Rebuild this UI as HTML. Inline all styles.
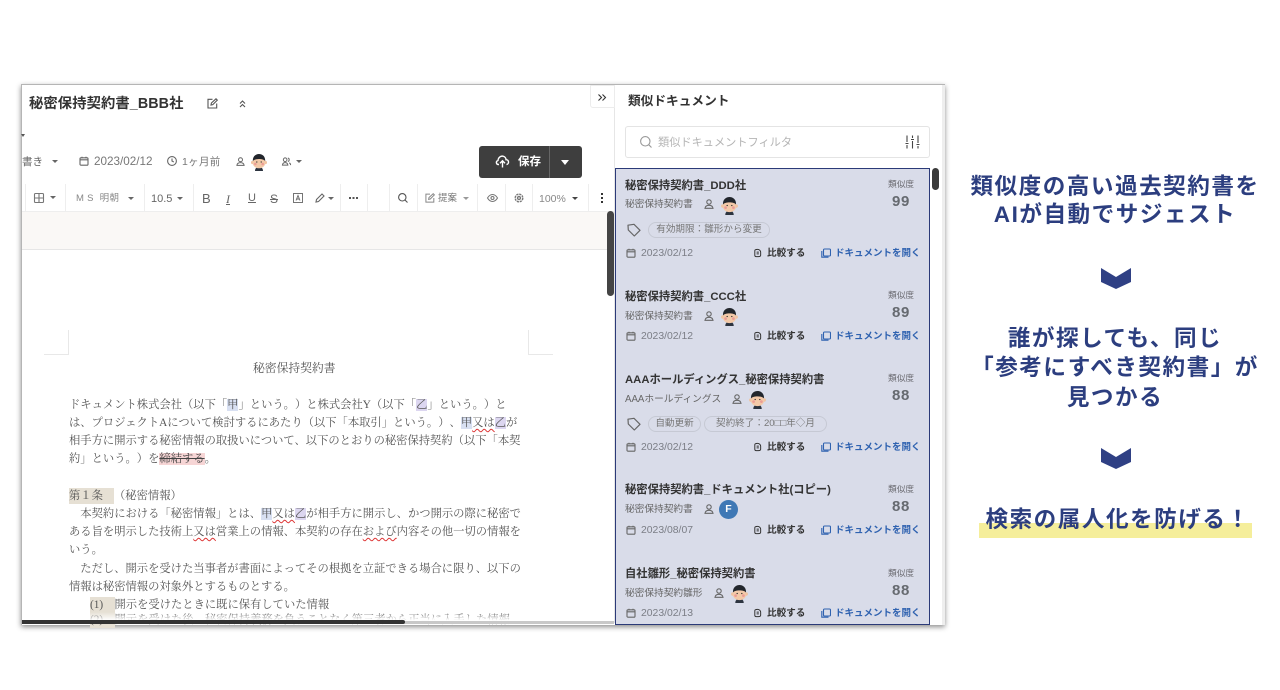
<!DOCTYPE html>
<html lang="ja"><head><meta charset="utf-8">
<style>
html,body{margin:0;padding:0;background:#fff}
#p{position:relative;width:1280px;height:690px;overflow:hidden;background:#fff;font-family:"Liberation Sans","Noto Sans CJK JP",sans-serif;text-spacing-trim:space-all}
.a{position:absolute}
.t{position:absolute;white-space:nowrap;line-height:16px;height:16px;margin-top:1px}
svg.i{position:absolute;fill:none;stroke:#666;stroke-width:1.1;overflow:visible}
#w{position:absolute;left:21px;top:84px;width:924px;height:541px;background:#fff;box-shadow:0 2px 5px rgba(0,0,0,.45);border-top:1px solid #b5b5b5;border-left:1px solid #b5b5b5;box-sizing:border-box}
.b{position:absolute;left:69px;white-space:nowrap;font:11.3px/16px "Liberation Serif","Noto Serif CJK SC",serif;color:#555;height:16px;margin-top:1px}
.hb{background:#d8e0f2}.hp{background:#dcd6f0}.hg{background:#e6e0d4;display:inline-block}
.w{text-decoration:underline wavy #d33 1px;text-underline-offset:2px}
.c1{font-size:11.3px;font-weight:700;color:#333;left:625px}
.c2{font-size:9.7px;color:#666;left:625px}
.c3{font-size:8.7px;color:#6a6a70;left:888px}
.c4{font-size:15px;font-weight:700;color:#666a70;left:892px;letter-spacing:.6px}
.c5{font-size:10.4px;color:#7b7e86;left:641px}
.c6{font-size:9.6px;font-weight:700;color:#333;left:767px}
.c7{font-size:9.5px;font-weight:700;color:#2f62b0;left:835px}
.pill{position:absolute;height:16px;border:1px solid #c6c9d4;border-radius:9px;box-sizing:border-box;font-size:9.6px;line-height:14px;color:#777;text-align:center;white-space:nowrap}
.sep{position:absolute;top:184px;width:1px;height:27px;background:#eee}
.r{position:absolute;left:961px;width:308px;text-align:center;color:#2c3e7f;font-size:22.6px;font-weight:700;line-height:30px;height:30px;white-space:nowrap;letter-spacing:1.5px;margin-top:1px}
.tri{position:absolute;width:0;height:0;border-left:3px solid transparent;border-right:3px solid transparent;border-top:3.5px solid #666}
</style></head><body>
<div id="p">
<svg width="0" height="0" style="position:absolute">
<symbol id="av" viewBox="0 0 18 18">
<path d="M5 18c0-3 2-4 4-4s4 1 4 4z" fill="#2d3440"/>
<circle cx="2.600" cy="9.500" r="1.600" fill="#f0c3a0"/><circle cx="15.400" cy="9.500" r="1.600" fill="#f0c3a0"/>
<ellipse cx="9" cy="9.500" rx="6.400" ry="5.800" fill="#f3c9a8"/>
<path d="M2.800 8C2.600 3 6 1 9 1s6.400 2 6.200 7C13 5.400 5 5.400 2.800 8z" fill="#22262c"/>
<circle cx="5.300" cy="11" r="1.300" fill="#ec9d96"/><circle cx="12.700" cy="11" r="1.300" fill="#ec9d96"/>
<circle cx="6.800" cy="9" r=".6" fill="#222"/><circle cx="11.200" cy="9" r=".6" fill="#222"/>
</symbol>
<symbol id="pe" viewBox="0 0 10 10"><circle cx="5" cy="3" r="2.200"/><path d="M1 9.300c.3-2.200 1.800-3 4-3s3.700.8 4 3z"/></symbol>
<symbol id="ca" viewBox="0 0 10 10"><rect x="1" y="1.800" width="8" height="7.400" rx="1"/><path d="M1 3.800h8M3 .8v1.500M7 .8v1.500"/></symbol>
<symbol id="tg" viewBox="0 0 14 14"><path d="M1 2.200 1.300 7l6 6 5.700-5.700-6-6z" stroke-linejoin="round"/></symbol>
<symbol id="cm" viewBox="0 0 10 10"><path d="M2 2.500C2 1.500 3 1 5 1s3.500 1.500 3.500 3v3.500C8.500 8.500 7.500 9 6 9H3.500C2.500 9 2 8.500 2 7.500z"/><path d="M4 4h2.500M4 6h2.500"/></symbol>
<symbol id="dc" viewBox="0 0 10 10"><rect x="2.500" y="1" width="7" height="7" rx="1"/><path d="M.8 3v6.200h6.700"/></symbol>
</svg>

<div id="w"></div>
<!-- left panel -->
<div class="a" style="left:22px;top:211px;width:592px;height:39px;background:#faf8f6;border-top:1px solid #eee;border-bottom:1px solid #e6e6e6;box-sizing:border-box"></div>
<div class="a" style="left:614px;top:85px;width:1px;height:538px;background:#e6e6e6"></div>
<div class="t" style="left:29px;top:95px;font-size:14.3px;font-weight:700;color:#333;letter-spacing:.1px">秘密保持契約書_BBB社</div>
<svg class="i" style="left:207px;top:98px;stroke:#555" width="11" height="11" viewBox="0 0 11 11"><path d="M5.500 1.300H1v8.700h8.700V5.500"/><path d="M4 7l.4-2L9 .8l1.300 1.300L5.800 6.600z"/></svg>
<svg class="i" style="left:239px;top:100px;stroke:#555" width="7" height="8" viewBox="0 0 7 8"><path d="M1 3.500 3.500 1 6 3.500M1 7 3.500 4.500 6 7"/></svg>
<div class="tri" style="left:21px;top:134px;border-top-color:#555;border-left-width:2px;border-right-width:2px"></div>

<div class="t" style="left:22px;top:153px;font-size:10.500px;color:#666">書き</div>
<div class="tri" style="left:52px;top:160px"></div>
<svg class="i" style="left:79px;top:156px" width="10" height="10"><use href="#ca"/></svg>
<div class="t" style="left:94px;top:153px;font-size:11.700px;color:#777">2023/02/12</div>
<svg class="i" style="left:167px;top:156px" width="10" height="10" viewBox="0 0 10 10"><circle cx="5" cy="5" r="4.400"/><path d="M5 2.500V5l1.800 1"/></svg>
<div class="t" style="left:182px;top:153px;font-size:10.500px;color:#777;letter-spacing:.3px">1ヶ月前</div>
<svg class="i" style="left:236px;top:157px" width="9" height="9"><use href="#pe"/></svg>
<svg class="a" style="left:250px;top:153px" width="18" height="18"><use href="#av"/></svg>
<svg class="i" style="left:282px;top:157px" width="9" height="9" viewBox="0 0 10 10"><circle cx="3.500" cy="3" r="2"/><path d="M.5 9c.2-2 1.300-2.800 3-2.800s2.800.8 3 2.800zM6.500 1.200c2 0 2 3.600 0 3.600M8 6.500c1 .3 1.500 1 1.600 2.500"/></svg>
<div class="tri" style="left:296px;top:160px"></div>

<div class="a" style="left:479px;top:146px;width:103px;height:32px;background:#3e3e3e;border-radius:3px"></div>
<div class="a" style="left:549px;top:146px;width:1px;height:32px;background:#666"></div>
<svg class="i" style="left:495px;top:155px;stroke:#fff;stroke-width:1.400" width="15" height="13" viewBox="0 0 15 13"><path d="M4 9.500H3.500C1 9.500 .6 6.200 3 5.500 3.300 2 6 .8 8 1.200c2 .4 3 2 3 3.500 3-.2 3.500 4.300.5 4.800"/><path d="M7.500 12.500V6M5 8.300l2.500-2.500L10 8.300"/></svg>
<div class="t" style="left:518px;top:153px;font-size:11.500px;font-weight:700;color:#fff">保存</div>
<div class="tri" style="left:561px;top:160px;border-left-width:4.500px;border-right-width:4.500px;border-top:5.500px solid #fff"></div>

<div class="a" style="left:590px;top:85px;width:25px;height:23px;background:#fff;border:1px solid #ececec;border-radius:0 0 0 3px;box-sizing:border-box"></div>
<svg class="i" style="left:598px;top:94px;stroke:#333" width="8" height="7" viewBox="0 0 8 7"><path d="M.5.500 3.500 3.500.5 6.500M4.500.500 7.500 3.500 4.500 6.500"/></svg>

<!-- toolbar -->
<div class="sep" style="left:25px"></div><div class="sep" style="left:65px"></div><div class="sep" style="left:144px"></div><div class="sep" style="left:193px"></div><div class="sep" style="left:340px"></div><div class="sep" style="left:367px"></div><div class="sep" style="left:389px"></div><div class="sep" style="left:417px"></div><div class="sep" style="left:477px"></div><div class="sep" style="left:505px"></div><div class="sep" style="left:532px"></div><div class="sep" style="left:588px"></div>
<svg class="i" style="left:34px;top:193px;stroke:#777" width="10" height="10" viewBox="0 0 10 10"><rect x=".5" y=".5" width="9" height="9" rx="1"/><path d="M.5 5h9M5 .5v9"/></svg>
<div class="tri" style="left:50px;top:196px"></div>
<div class="t" style="left:76px;top:190px;font-size:9.500px;color:#888;letter-spacing:.3px">M S &nbsp;明朝</div>
<div class="tri" style="left:128px;top:197px"></div>
<div class="t" style="left:151px;top:190px;font-size:11px;color:#666">10.5</div>
<div class="tri" style="left:177px;top:197px"></div>
<div class="t" style="left:202px;top:190px;font-size:13px;color:#666">B</div>
<div class="t" style="left:226px;top:190px;font-size:12px;color:#666;font-family:'Liberation Serif',serif;font-style:italic;text-decoration:underline;text-decoration-thickness:0">I</div>
<div class="t" style="left:248px;top:189px;font-size:11px;color:#666;text-decoration:underline">U</div>
<div class="t" style="left:270px;top:190px;font-size:12px;color:#666;text-decoration:line-through">S</div>
<svg class="i" style="left:293px;top:193px;stroke-width:.9" width="10" height="10" viewBox="0 0 10 10"><rect x=".5" y=".5" width="9" height="9"/><path d="M3 7.500 5 2.500l2 5M3.700 6h2.600"/></svg>
<svg class="i" style="left:315px;top:193px" width="10" height="10" viewBox="0 0 10 10"><path d="M1 9l.5-2.500L7 1l2 2-5.500 5.500z"/></svg>
<div class="tri" style="left:328px;top:197px"></div>
<div class="a" style="left:349px;top:197px;width:2px;height:2px;background:#555;box-shadow:3.500px 0 #555,7px 0 #555"></div>
<svg class="i" style="left:398px;top:193px;stroke:#555" width="10" height="10" viewBox="0 0 10 10"><circle cx="4.300" cy="4.300" r="3.700"/><path d="M7 7l2.500 2.500"/></svg>
<svg class="i" style="left:425px;top:193px;stroke:#888" width="10" height="10" viewBox="0 0 11 11"><path d="M5.500 1.300H1v8.700h8.700V5.500"/><path d="M4 7l.4-2L9 .8l1.300 1.300L5.800 6.600z"/></svg>
<div class="t" style="left:438px;top:190px;font-size:9.500px;color:#777">提案</div>
<div class="tri" style="left:463px;top:197px;border-top-color:#999"></div>
<svg class="i" style="left:487px;top:194px;stroke:#777" width="11" height="8" viewBox="0 0 11 8"><path d="M.5 4C2 1.500 3.500.5 5.500.5s3.500 1 5 3.500c-1.500 2.500-3 3.500-5 3.500S2 6.500.5 4z"/><circle cx="5.500" cy="4" r="1.500"/></svg>
<svg class="i" style="left:514px;top:193px;stroke-width:1.400;stroke:#777" width="10" height="10" viewBox="0 0 10 10"><circle cx="5" cy="5" r="1.500"/><circle cx="5" cy="5" r="3.800" stroke-dasharray="2.200 .8"/></svg>
<div class="t" style="left:539px;top:190px;font-size:10.500px;color:#888">100%</div>
<div class="tri" style="left:572px;top:197px;border-top-color:#444"></div>
<div class="a" style="left:601px;top:193px;width:2px;height:2px;background:#333;box-shadow:0 4px #333,0 8px #333"></div>

<div class="a" style="left:607px;top:211px;width:7px;height:85px;background:#444;border-radius:4px"></div>

<!-- page -->
<div class="a" style="left:44px;top:330px;width:25px;height:25px;border-right:1px solid #e8e8e8;border-bottom:1px solid #e8e8e8;box-sizing:border-box"></div>
<div class="a" style="left:528px;top:330px;width:25px;height:25px;border-left:1px solid #e8e8e8;border-bottom:1px solid #e8e8e8;box-sizing:border-box"></div>
<div class="t" style="left:253px;top:359px;font:11.800px/16px 'Liberation Serif','Noto Serif CJK SC',serif;color:#555">秘密保持契約書</div>
<div class="b" style="top:396px">ドキュメント株式会社（以下「<span class="hb">甲</span>」という。）と株式会社Y（以下「<span class="hp">乙</span>」という。）と</div>
<div class="b" style="top:414px">は、プロジェクトAについて検討するにあたり（以下「本取引」という。）、<span class="hb">甲</span><span class="w">又は</span><span class="hp">乙</span>が</div>
<div class="b" style="top:432px">相手方に開示する秘密情報の取扱いについて、以下のとおりの秘密保持契約（以下「本契</div>
<div class="b" style="top:450px">約」という。）を<span style="background:#f6d5d5;text-decoration:line-through;color:#444">締結する</span>。</div>
<div class="b" style="top:487px"><span class="hg" style="width:45px">第１条</span>（秘密情報）</div>
<div class="b" style="top:505px">　本契約における「秘密情報」とは、<span class="hb">甲</span><span class="w">又は</span><span class="hp">乙</span>が相手方に開示し、かつ開示の際に秘密で</div>
<div class="b" style="top:523px">ある旨を明示した技術上<span class="w">又は</span>営業上の情報、本契約の存在<span class="w">および</span>内容その他一切の情報を</div>
<div class="b" style="top:541px">いう。</div>
<div class="b" style="top:560px">　ただし、開示を受けた当事者が書面によってその根拠を立証できる場合に限り、以下の</div>
<div class="b" style="top:578px">情報は秘密情報の対象外とするものとする。</div>
<div class="b" style="top:596px;left:90px"><span class="hg" style="width:24.500px">(1)</span>開示を受けたときに既に保有していた情報</div>
<div class="b" style="top:611px;left:90px"><span class="hg" style="width:24.500px">(2)</span>開示を受けた後、秘密保持義務を負うことなく第三者から正当に入手した情報</div>
<div class="a" style="left:22px;top:612px;width:592px;height:10px;background:linear-gradient(rgba(255,255,255,0),#fff 85%)"></div>
<div class="a" style="left:22px;top:621px;width:592px;height:3px;background:#c8c8c8"></div>
<div class="a" style="left:22px;top:620px;width:383px;height:4px;background:#333;border-radius:0 3px 3px 0"></div>

<!-- right panel -->
<div class="a" style="left:942px;top:85px;width:3px;height:540px;background:#eee"></div>
<div class="t" style="left:628px;top:92px;font-size:12.700px;font-weight:700;color:#333">類似ドキュメント</div>
<div class="a" style="left:625px;top:126px;width:305px;height:32px;background:#fff;border:1px solid #e4e4e4;border-radius:3px;box-sizing:border-box"></div>
<svg class="i" style="left:640px;top:136px;stroke:#999" width="12" height="12" viewBox="0 0 12 12"><circle cx="5.300" cy="5.300" r="4.700"/><path d="M8.700 8.700 11.500 11.500"/></svg>
<div class="t" style="left:658px;top:134px;font-size:11.200px;color:#b5b5b5">類似ドキュメントフィルタ</div>
<svg class="i" style="left:905px;top:135px;stroke:#444" width="15" height="14" viewBox="0 0 15 14"><path d="M2 .5V7M2 10v3.500M7.500.5V3M7.500 6v7.500M13 .5V8M13 11v2.500M.5 8.500h3M6 4.500h3M11.500 9.500h3"/></svg>

<div class="a" style="left:615px;top:168px;width:315px;height:457px;background:#d9dce9;border:1px solid #2b3a78;box-sizing:border-box"></div>
<div class="a" style="left:932px;top:168px;width:7px;height:22px;background:#3a3a3a;border-radius:4px"></div>

<!-- card 1 -->
<div class="t c1" style="top:177px">秘密保持契約書_DDD社</div>
<div class="t c2" style="top:196px">秘密保持契約書</div>
<svg class="i" style="left:704px;top:199px" width="10" height="10"><use href="#pe"/></svg>
<svg class="a" style="left:720px;top:196px" width="19" height="19"><use href="#av"/></svg>
<div class="t c3" style="top:175px">類似度</div><div class="t c4" style="top:193px">99</div>
<svg class="i" style="left:627px;top:223px;stroke-width:1.200" width="14" height="14"><use href="#tg"/></svg>
<div class="pill" style="left:648px;top:222px;width:122px">有効期限：雛形から変更</div>
<svg class="i" style="left:626px;top:248px" width="10" height="10"><use href="#ca"/></svg>
<div class="t c5" style="top:245px">2023/02/12</div>
<svg class="i" style="left:753px;top:248px;stroke:#333" width="9" height="10"><use href="#cm"/></svg>
<div class="t c6" style="top:245px">比較する</div>
<svg class="i" style="left:821px;top:248px;stroke:#2f62b0" width="10" height="10"><use href="#dc"/></svg>
<div class="t c7" style="top:245px">ドキュメントを開く</div>

<!-- card 2 -->
<div class="t c1" style="top:288px">秘密保持契約書_CCC社</div>
<div class="t c2" style="top:308px">秘密保持契約書</div>
<svg class="i" style="left:704px;top:311px" width="10" height="10"><use href="#pe"/></svg>
<svg class="a" style="left:720px;top:307px" width="19" height="19"><use href="#av"/></svg>
<div class="t c3" style="top:286px">類似度</div><div class="t c4" style="top:304px">89</div>
<svg class="i" style="left:626px;top:331px" width="10" height="10"><use href="#ca"/></svg>
<div class="t c5" style="top:328px">2023/02/12</div>
<svg class="i" style="left:753px;top:331px;stroke:#333" width="9" height="10"><use href="#cm"/></svg>
<div class="t c6" style="top:328px">比較する</div>
<svg class="i" style="left:821px;top:331px;stroke:#2f62b0" width="10" height="10"><use href="#dc"/></svg>
<div class="t c7" style="top:328px">ドキュメントを開く</div>

<!-- card 3 -->
<div class="t c1" style="top:371px">AAAホールディングス_秘密保持契約書</div>
<div class="t c2" style="top:391px">AAAホールディングス</div>
<svg class="i" style="left:732px;top:394px" width="10" height="10"><use href="#pe"/></svg>
<svg class="a" style="left:748px;top:390px" width="19" height="19"><use href="#av"/></svg>
<div class="t c3" style="top:369px">類似度</div><div class="t c4" style="top:387px">88</div>
<svg class="i" style="left:627px;top:417px;stroke-width:1.200" width="14" height="14"><use href="#tg"/></svg>
<div class="pill" style="left:648px;top:416px;width:53px">自動更新</div>
<div class="pill" style="left:704px;top:416px;width:123px">契約終了：20□□年◇月</div>
<svg class="i" style="left:626px;top:442px" width="10" height="10"><use href="#ca"/></svg>
<div class="t c5" style="top:439px">2023/02/12</div>
<svg class="i" style="left:753px;top:442px;stroke:#333" width="9" height="10"><use href="#cm"/></svg>
<div class="t c6" style="top:439px">比較する</div>
<svg class="i" style="left:821px;top:442px;stroke:#2f62b0" width="10" height="10"><use href="#dc"/></svg>
<div class="t c7" style="top:439px">ドキュメントを開く</div>

<!-- card 4 -->
<div class="t c1" style="top:481px">秘密保持契約書_ドキュメント社(コピー)</div>
<div class="t c2" style="top:501px">秘密保持契約書</div>
<svg class="i" style="left:704px;top:504px" width="10" height="10"><use href="#pe"/></svg>
<div class="a" style="left:719px;top:500px;width:19px;height:19px;border-radius:50%;background:#3f78b5;color:#fff;font-size:10.500px;font-weight:700;line-height:19px;text-align:center">F</div>
<div class="t c3" style="top:480px">類似度</div><div class="t c4" style="top:498px">88</div>
<svg class="i" style="left:626px;top:525px" width="10" height="10"><use href="#ca"/></svg>
<div class="t c5" style="top:522px">2023/08/07</div>
<svg class="i" style="left:753px;top:525px;stroke:#333" width="9" height="10"><use href="#cm"/></svg>
<div class="t c6" style="top:522px">比較する</div>
<svg class="i" style="left:821px;top:525px;stroke:#2f62b0" width="10" height="10"><use href="#dc"/></svg>
<div class="t c7" style="top:522px">ドキュメントを開く</div>

<!-- card 5 -->
<div class="t c1" style="top:565px">自社雛形_秘密保持契約書</div>
<div class="t c2" style="top:585px">秘密保持契約雛形</div>
<svg class="i" style="left:714px;top:588px" width="10" height="10"><use href="#pe"/></svg>
<svg class="a" style="left:730px;top:584px" width="19" height="19"><use href="#av"/></svg>
<div class="t c3" style="top:564px">類似度</div><div class="t c4" style="top:582px">88</div>
<svg class="i" style="left:626px;top:608px" width="10" height="10"><use href="#ca"/></svg>
<div class="t c5" style="top:605px">2023/02/13</div>
<svg class="i" style="left:753px;top:608px;stroke:#333" width="9" height="10"><use href="#cm"/></svg>
<div class="t c6" style="top:605px">比較する</div>
<svg class="i" style="left:821px;top:608px;stroke:#2f62b0" width="10" height="10"><use href="#dc"/></svg>
<div class="t c7" style="top:605px">ドキュメントを開く</div>

<!-- right copy -->
<div class="r" style="top:171px">類似度の高い過去契約書を</div>
<div class="r" style="top:199px">AIが自動でサジェスト</div>
<svg class="a" style="left:1100px;top:267px" width="32" height="23"><polygon points="1,1 16,10 31,1 31,15 16,22 1,15" fill="#2f4084"/></svg>
<div class="r" style="top:323px">誰が探しても、同じ</div>
<div class="r" style="top:352px">「参考にすべき契約書」が</div>
<div class="r" style="top:382px">見つかる</div>
<svg class="a" style="left:1100px;top:447px" width="32" height="23"><polygon points="1,1 16,10 31,1 31,15 16,22 1,15" fill="#2f4084"/></svg>
<div class="a" style="left:979px;top:523px;width:273px;height:15px;background:#f5ee9b"></div>
<div class="r" style="top:504px;left:964px">検索の属人化を防げる！</div>
</div>
</body></html>
